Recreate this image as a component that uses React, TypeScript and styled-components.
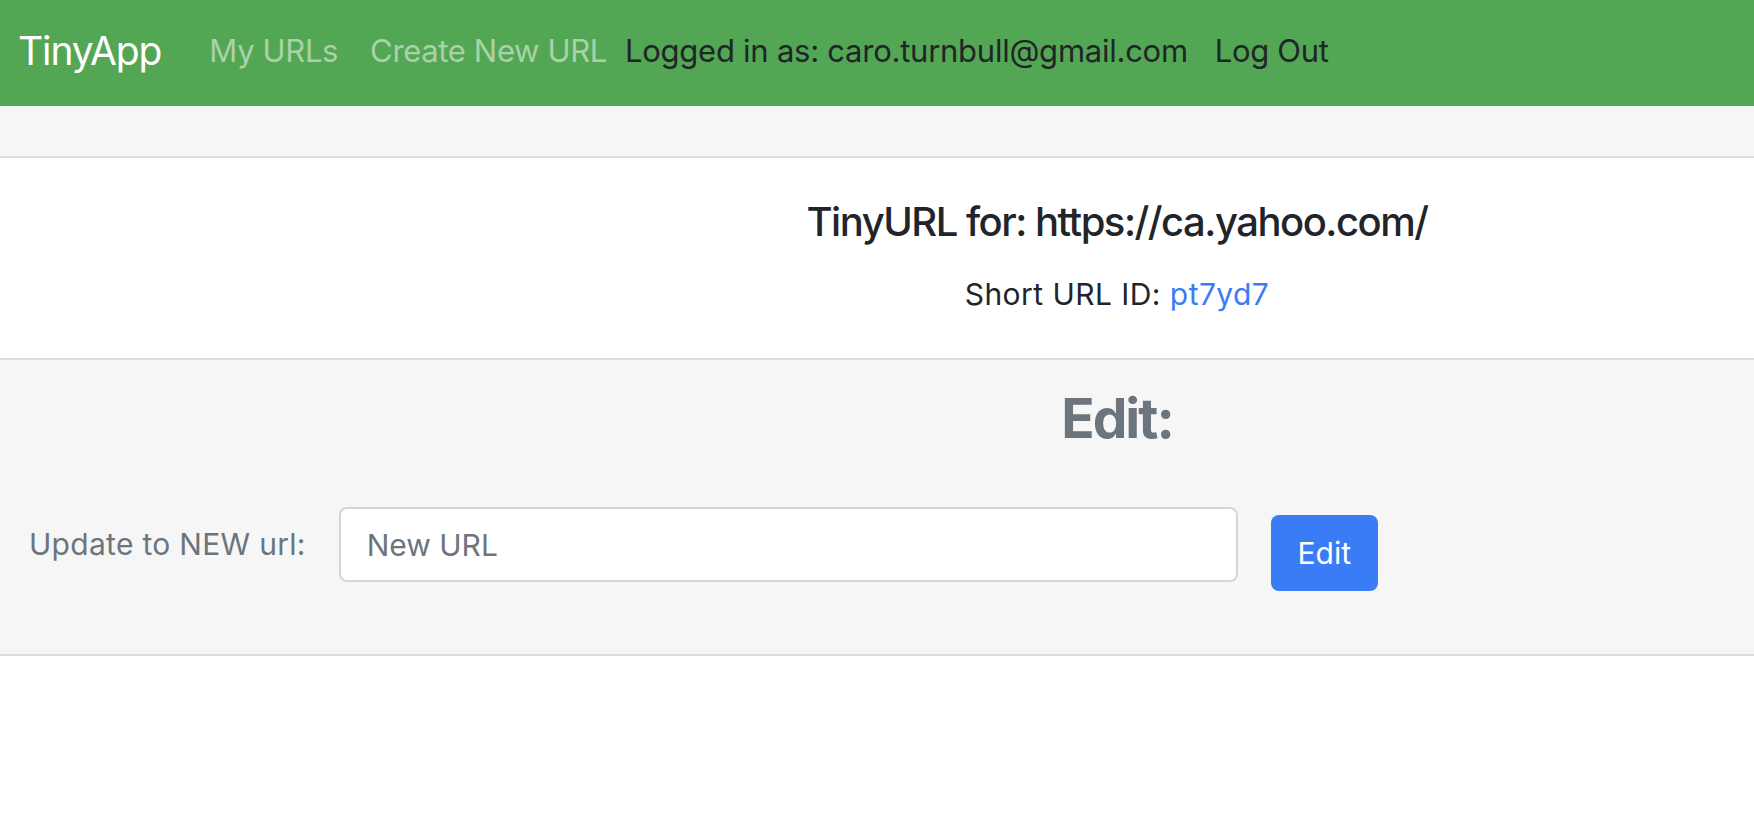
import React from "react";
import styled, { createGlobalStyle } from "styled-components";

const GlobalStyle = createGlobalStyle`
  html, body {
    margin: 0;
    padding: 0;
    background: #ffffff;
    font-family: Inter, "Noto Sans", "Liberation Sans", sans-serif;
    color: #212529;
  }
  * { box-sizing: border-box; }
`;

const Navbar = styled.nav`
  height: 106px;
  background: #53a653;
  display: flex;
  align-items: center;
  padding: 0 0 5px 18px;
`;

const Brand = styled.a`
  font-size: 39px;
  line-height: 1;
  letter-spacing: -1.1px;
  color: #ffffff;
  text-decoration: none;
  margin-right: 48px;
`;

const NavItem = styled.a<{ $muted?: boolean; $gap: number; $spacing?: number }>`
  font-size: 31px;
  line-height: 1;
  letter-spacing: ${(p) => p.$spacing ?? -0.35}px;
  color: ${(p) => (p.$muted ? "rgba(255,255,255,0.5)" : "#212529")};
  text-decoration: none;
  margin-right: ${(p) => p.$gap}px;
  white-space: nowrap;
`;

const Band = styled.div`
  height: 52px;
  background: #f6f6f6;
  border-bottom: 2px solid #dcdcdc;
`;

const Section = styled.section<{ $tone: "white" | "gray" }>`
  background: ${(p) => (p.$tone === "gray" ? "#f6f6f6" : "#ffffff")};
  border-bottom: 2px solid #dcdcdc;
`;

const CenterColumn = styled.div<{ $top: number; $height: number }>`
  margin-left: 480px;
  text-align: center;
  padding-top: ${(p) => p.$top}px;
  height: ${(p) => p.$height}px;
`;

const Title = styled.h3`
  margin: 0;
  font-size: 40px;
  line-height: 48px;
  font-weight: 500;
  letter-spacing: -1.5px;
  color: #212529;
`;

const SubLine = styled.p`
  margin: 30px 0 0;
  font-size: 30px;
  line-height: 36px;
  letter-spacing: 0.45px;
  color: #212529;
`;

const IdLink = styled.a`
  color: #3b7cf6;
  text-decoration: none;
`;

const EditHeading = styled.h2`
  margin: 0;
  font-size: 55px;
  line-height: 66px;
  font-weight: 700;
  letter-spacing: -2px;
  color: #6c757d;
`;

const FormRow = styled.form`
  display: flex;
  align-items: flex-start;
  padding: 56px 0 63px 29px;
`;

const Label = styled.label`
  font-size: 30px;
  line-height: 75px;
  letter-spacing: 0.3px;
  color: #6c757d;
  margin-right: 33px;
  white-space: nowrap;
`;

const UrlInput = styled.input`
  width: 899px;
  height: 75px;
  border: 2px solid #d2d6da;
  border-radius: 8px;
  background: #ffffff;
  padding: 0 26px;
  font-family: inherit;
  font-size: 30px;
  color: #212529;
  &::placeholder {
    color: #6c757d;
  }
`;

const PrimaryButton = styled.button`
  margin: 8px 0 0 33px;
  width: 107px;
  height: 76px;
  border: none;
  border-radius: 8px;
  background: #3a7cf6;
  color: #ffffff;
  font-family: inherit;
  font-size: 30px;
  padding: 0;
`;

export default function App() {
  return (
    <>
      <GlobalStyle />
      <Navbar>
        <Brand href="#">TinyApp</Brand>
        <NavItem $muted $gap={32} href="#">My URLs</NavItem>
        <NavItem $muted $gap={18} href="#">Create New URL</NavItem>
        <NavItem $gap={27} $spacing={-0.25} as="span">Logged in as: caro.turnbull@gmail.com</NavItem>
        <NavItem $gap={0} href="#">Log Out</NavItem>
      </Navbar>
      <Band />
      <Section $tone="white">
        <CenterColumn $top={40} $height={200}>
          <Title>TinyURL for: https://ca.yahoo.com/</Title>
          <SubLine>
            Short URL ID: <IdLink href="#">pt7yd7</IdLink>
          </SubLine>
        </CenterColumn>
      </Section>
      <Section $tone="gray">
        <CenterColumn $top={25} $height={91}>
          <EditHeading>Edit:</EditHeading>
        </CenterColumn>
        <FormRow onSubmit={(e) => e.preventDefault()}>
          <Label htmlFor="newurl">Update to NEW url:</Label>
          <UrlInput id="newurl" type="text" placeholder="New URL" />
          <PrimaryButton type="submit">Edit</PrimaryButton>
        </FormRow>
      </Section>
    </>
  );
}
